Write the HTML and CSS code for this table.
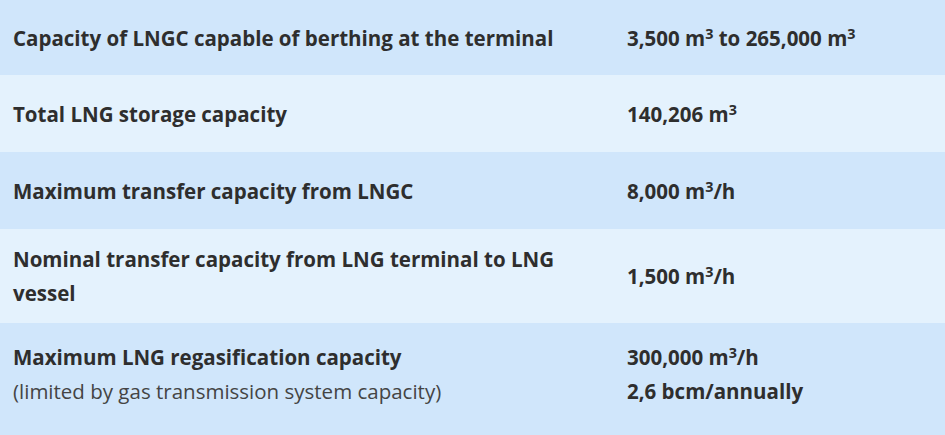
FILE: index.html
```html
<!DOCTYPE html>
<html>
<head>
<meta charset="utf-8">
<link rel="stylesheet" href="styles.css">
</head>
<body>
<div class="specs">
  <div class="row dark r1">
    <div class="label">Capacity of LNGC capable of berthing at the terminal</div>
    <div class="value">3,500 m<sup>3</sup> to 265,000 m<sup>3</sup></div>
  </div>
  <div class="row light r2">
    <div class="label">Total LNG storage capacity</div>
    <div class="value">140,206 m<sup>3</sup></div>
  </div>
  <div class="row dark r3">
    <div class="label">Maximum transfer capacity from LNGC</div>
    <div class="value">8,000 m<sup>3</sup>/h</div>
  </div>
  <div class="row light r4">
    <div class="label">Nominal transfer capacity from LNG terminal to LNG vessel</div>
    <div class="value">1,500 m<sup>3</sup>/h</div>
  </div>
  <div class="row dark r5">
    <div class="label">Maximum LNG regasification capacity<br><span class="note">(limited by gas transmission system capacity)</span></div>
    <div class="value">300,000 m<sup>3</sup>/h<br>2,6 bcm/annually</div>
  </div>
</div>
</body>
</html>
```
FILE: styles.css
```css
html, body {
  margin: 0;
  padding: 0;
}
body {
  font-family: "Open Sans", "Liberation Sans", sans-serif;
  font-size: 20.5px;
  line-height: 34px;
  color: #2e2e2e;
  width: 945px;
  height: 435px;
  overflow: hidden;
  background: #d0e6fb;
}
.specs {
  display: flex;
  flex-direction: column;
}
.row {
  display: flex;
  align-items: center;
}
.dark { background: #d0e6fb; }
.light { background: #e4f2fd; }
.r1 { height: 75px; }
.r2 { height: 77px; }
.r3 { height: 77px; }
.r4 { height: 94px; }
.r5 { height: 112px; align-items: flex-start; padding-top: 17px; box-sizing: border-box; }
.label {
  width: 627px;
  box-sizing: border-box;
  padding-left: 13px;
  padding-right: 40px;
  font-weight: 700;
}
.value {
  font-weight: 700;
}
.note {
  font-weight: 400;
  color: #444;
}
sup {
  font-size: 0.7em;
  line-height: 0;
  vertical-align: 0.5em;
}
```
